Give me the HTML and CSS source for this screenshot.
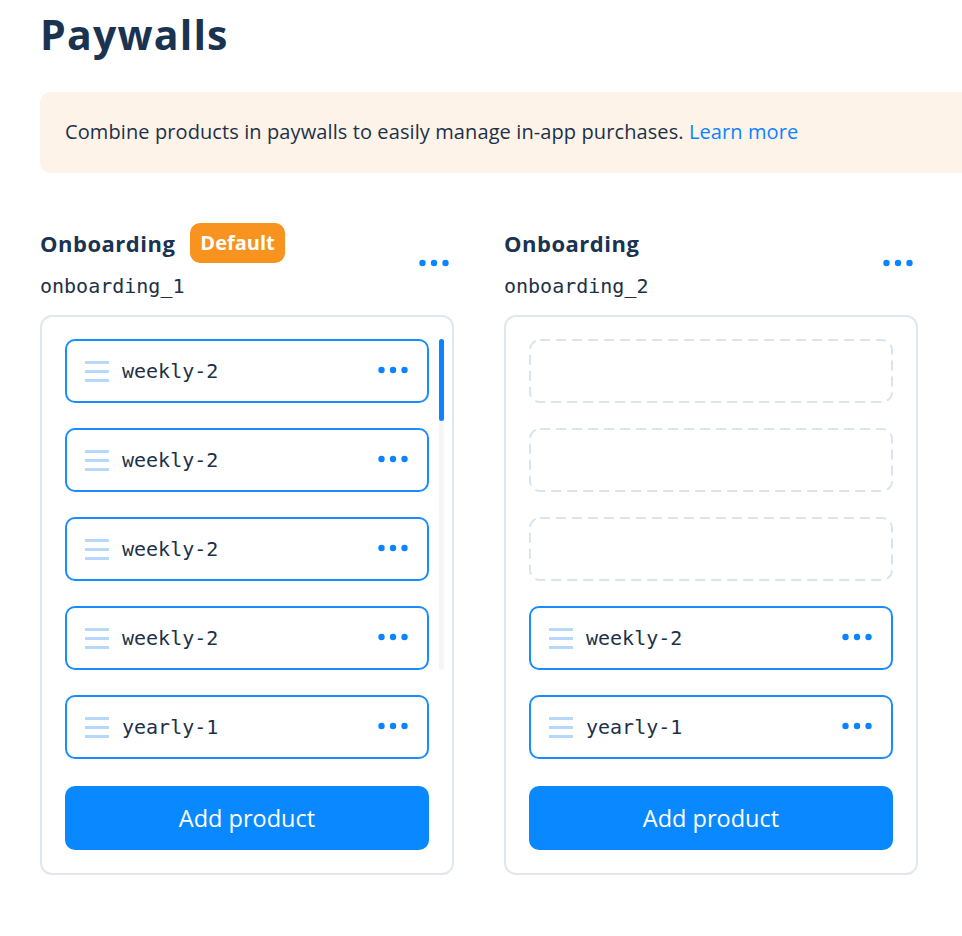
FILE: index.html
```html
<!DOCTYPE html>
<html lang="en">
<head>
<meta charset="utf-8">
<title>Paywalls</title>
<link rel="stylesheet" href="styles.css">
</head>
<body>
<main class="page">
  <h1 class="title">Paywalls</h1>
  <div class="banner">Combine products in paywalls to easily manage in-app purchases. <a class="link" href="#">Learn more</a></div>

  <div class="columns">
    <section class="paywall">
      <header class="pw-head">
        <div class="pw-info">
          <div class="pw-title-row"><h2 class="pw-name">Onboarding</h2><span class="badge">Default</span></div>
          <div class="pw-id">onboarding_1</div>
        </div>
        <button class="more" aria-label="More"><svg width="30" height="8" viewBox="0 0 30 8"><circle cx="3.5" cy="4" r="3.2"/><circle cx="15" cy="4" r="3.2"/><circle cx="26.5" cy="4" r="3.2"/></svg></button>
      </header>
      <div class="card">
        <div class="list">
          <div class="item"><svg class="grip" width="24" height="21" viewBox="0 0 24 21"><rect y="0" width="24" height="3"/><rect y="9" width="24" height="3"/><rect y="18" width="24" height="3"/></svg><span class="item-name">weekly-2</span><svg class="dots" width="30" height="8" viewBox="0 0 30 8"><circle cx="3.5" cy="4" r="3.2"/><circle cx="15" cy="4" r="3.2"/><circle cx="26.5" cy="4" r="3.2"/></svg></div>
          <div class="item"><svg class="grip" width="24" height="21" viewBox="0 0 24 21"><rect y="0" width="24" height="3"/><rect y="9" width="24" height="3"/><rect y="18" width="24" height="3"/></svg><span class="item-name">weekly-2</span><svg class="dots" width="30" height="8" viewBox="0 0 30 8"><circle cx="3.5" cy="4" r="3.2"/><circle cx="15" cy="4" r="3.2"/><circle cx="26.5" cy="4" r="3.2"/></svg></div>
          <div class="item"><svg class="grip" width="24" height="21" viewBox="0 0 24 21"><rect y="0" width="24" height="3"/><rect y="9" width="24" height="3"/><rect y="18" width="24" height="3"/></svg><span class="item-name">weekly-2</span><svg class="dots" width="30" height="8" viewBox="0 0 30 8"><circle cx="3.5" cy="4" r="3.2"/><circle cx="15" cy="4" r="3.2"/><circle cx="26.5" cy="4" r="3.2"/></svg></div>
          <div class="item"><svg class="grip" width="24" height="21" viewBox="0 0 24 21"><rect y="0" width="24" height="3"/><rect y="9" width="24" height="3"/><rect y="18" width="24" height="3"/></svg><span class="item-name">weekly-2</span><svg class="dots" width="30" height="8" viewBox="0 0 30 8"><circle cx="3.5" cy="4" r="3.2"/><circle cx="15" cy="4" r="3.2"/><circle cx="26.5" cy="4" r="3.2"/></svg></div>
          <div class="item"><svg class="grip" width="24" height="21" viewBox="0 0 24 21"><rect y="0" width="24" height="3"/><rect y="9" width="24" height="3"/><rect y="18" width="24" height="3"/></svg><span class="item-name">yearly-1</span><svg class="dots" width="30" height="8" viewBox="0 0 30 8"><circle cx="3.5" cy="4" r="3.2"/><circle cx="15" cy="4" r="3.2"/><circle cx="26.5" cy="4" r="3.2"/></svg></div>
        </div>
        <div class="scroll-track"><div class="scroll-thumb"></div></div>
        <button class="add">Add product</button>
      </div>
    </section>

    <section class="paywall">
      <header class="pw-head">
        <div class="pw-info">
          <div class="pw-title-row"><h2 class="pw-name">Onboarding</h2></div>
          <div class="pw-id">onboarding_2</div>
        </div>
        <button class="more" aria-label="More"><svg width="30" height="8" viewBox="0 0 30 8"><circle cx="3.5" cy="4" r="3.2"/><circle cx="15" cy="4" r="3.2"/><circle cx="26.5" cy="4" r="3.2"/></svg></button>
      </header>
      <div class="card">
        <div class="list">
          <div class="slot"><svg class="slot-outline" width="364" height="64" viewBox="0 0 364 64"><rect x="1" y="1" width="362" height="62" rx="10" ry="10"/></svg></div>
          <div class="slot"><svg class="slot-outline" width="364" height="64" viewBox="0 0 364 64"><rect x="1" y="1" width="362" height="62" rx="10" ry="10"/></svg></div>
          <div class="slot"><svg class="slot-outline" width="364" height="64" viewBox="0 0 364 64"><rect x="1" y="1" width="362" height="62" rx="10" ry="10"/></svg></div>
          <div class="item"><svg class="grip" width="24" height="21" viewBox="0 0 24 21"><rect y="0" width="24" height="3"/><rect y="9" width="24" height="3"/><rect y="18" width="24" height="3"/></svg><span class="item-name">weekly-2</span><svg class="dots" width="30" height="8" viewBox="0 0 30 8"><circle cx="3.5" cy="4" r="3.2"/><circle cx="15" cy="4" r="3.2"/><circle cx="26.5" cy="4" r="3.2"/></svg></div>
          <div class="item"><svg class="grip" width="24" height="21" viewBox="0 0 24 21"><rect y="0" width="24" height="3"/><rect y="9" width="24" height="3"/><rect y="18" width="24" height="3"/></svg><span class="item-name">yearly-1</span><svg class="dots" width="30" height="8" viewBox="0 0 30 8"><circle cx="3.5" cy="4" r="3.2"/><circle cx="15" cy="4" r="3.2"/><circle cx="26.5" cy="4" r="3.2"/></svg></div>
        </div>
        <button class="add">Add product</button>
      </div>
    </section>
  </div>
</main>
</body>
</html>
```

FILE: styles.css
```css
html, body {
  margin: 0;
  padding: 0;
  background: #ffffff;
  overflow: hidden;
}

body {
  font-family: "Open Sans", "Noto Sans", sans-serif;
  color: #1a3049;
}

.page {
  padding: 0 0 0 40px;
}

.title {
  margin: 10px 0 0;
  font-size: 41px;
  line-height: 48px;
  font-weight: 700;
  color: #1a3350;
  letter-spacing: 1.2px;
}

.banner {
  margin-top: 34px;
  margin-right: -40px;
  background: #fef3e8;
  border-radius: 10px;
  padding: 26px 25px 27px;
  font-size: 20px;
  line-height: 28px;
  color: #1c3148;
  letter-spacing: 0.1px;
}

.link {
  color: #0a84ff;
  text-decoration: none;
}

.columns {
  display: flex;
  gap: 50px;
  margin-top: 50px;
}

.paywall {
  width: 414px;
}

.pw-head {
  display: flex;
  align-items: center;
  justify-content: space-between;
  padding-right: 5px;
}

.pw-title-row {
  display: flex;
  align-items: center;
  gap: 15px;
  min-height: 40px;
}

.pw-name {
  margin: 0;
  font-size: 22px;
  line-height: 28px;
  font-weight: 700;
  color: #1a3350;
  letter-spacing: 0.5px;
}

.badge {
  background: #f7931e;
  color: #ffffff;
  font-size: 20px;
  line-height: 40px;
  font-weight: 700;
  padding: 0 10px;
  border-radius: 10px;
}

.pw-id {
  margin-top: 11px;
  font-family: "DejaVu Sans Mono", monospace;
  font-size: 20px;
  line-height: 24px;
  color: #1c3148;
}

.more {
  border: 0;
  background: none;
  padding: 0;
  margin-top: 5px;
  display: flex;
  fill: #0a84ff;
}

.card {
  position: relative;
  margin-top: 17px;
  border: 2px solid #dfe7ef;
  border-radius: 12px;
  padding: 22px 23px 23px;
  display: flex;
  flex-direction: column;
}

.list {
  display: flex;
  flex-direction: column;
  gap: 25px;
}

.item {
  box-sizing: border-box;
  height: 64px;
  border: 2px solid #1a8cff;
  border-radius: 10px;
  display: flex;
  align-items: center;
  padding: 0 19px 0 18px;
}

.grip {
  fill: #b5d8fc;
  flex: none;
}

.item-name {
  flex: 1;
  margin-left: 13px;
  font-family: "DejaVu Sans Mono", monospace;
  font-size: 20px;
  color: #1c3148;
}

.dots {
  fill: #0a84ff;
  flex: none;
  margin-top: -3px;
}

.slot {
  height: 64px;
}

.slot-outline {
  display: block;
  fill: none;
  stroke: #d8e4ef;
  stroke-width: 2;
  stroke-dasharray: 10 6;
}

.scroll-track {
  position: absolute;
  right: 8px;
  top: 22px;
  width: 5px;
  height: 331px;
  background: #f5f6f8;
  border-radius: 3px;
}

.scroll-thumb {
  height: 82px;
  background: #0a84ff;
  border-radius: 3px;
}

.add {
  margin-top: 27px;
  height: 64px;
  border: 0;
  border-radius: 10px;
  background: #0a88ff;
  color: #ffffff;
  font-family: "Open Sans", "Noto Sans", sans-serif;
  font-size: 23.5px;
}
```
